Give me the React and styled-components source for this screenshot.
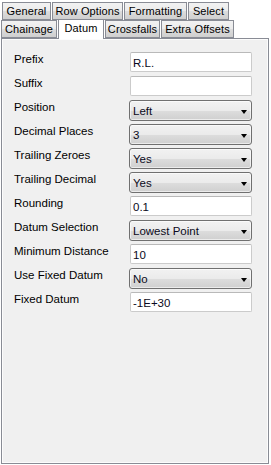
import styled, { createGlobalStyle } from 'styled-components';

const GlobalStyle = createGlobalStyle`
  html, body {
    margin: 0;
    padding: 0;
    background: #ffffff;
  }
  body {
    font-family: "Liberation Sans", Arial, sans-serif;
    font-size: 11.5px;
    color: #000;
  }
`;

const Window = styled.div`
  width: 271px;
  height: 465px;
  display: flex;
  flex-direction: column;
  padding: 2px 2px 1px 1px;
  box-sizing: border-box;
  background: #fff;
`;

const TabRow = styled.div`
  display: flex;
  align-items: flex-end;
  gap: 1px;
  height: 18px;
  padding-left: ${(p) => p.indent}px;
  position: relative;
  z-index: 1;
`;

const Tab = styled.div`
  box-sizing: border-box;
  width: ${(p) => p.w}px;
  height: ${(p) => (p.active ? 20 : 18)}px;
  margin-bottom: ${(p) => (p.active ? -1 : 0)}px;
  border: 1px solid #898c95;
  border-bottom: ${(p) => (p.active ? 'none' : '1px solid #898c95')};
  background: ${(p) => (p.active
    ? '#ffffff'
    : 'linear-gradient(#f2f2f2 0%, #ebebeb 50%, #dddddd 51%, #cfcfcf 100%)')};
  display: flex;
  justify-content: center;
  align-items: flex-start;
  padding-top: 2px;
  white-space: nowrap;
  font-size: 11px;
  letter-spacing: 0.1px;
`;

const Panel = styled.div`
  flex: 1;
  border: 1px solid #898c95;
  background: #f0f0f0;
  box-shadow: inset 0 0 0 1px #fcfcfc;
  padding: 13px 16px 0 12px;
  display: flex;
  flex-direction: column;
  gap: 4px;
`;

const Row = styled.div`
  display: flex;
  align-items: flex-start;
  justify-content: space-between;
  height: 20px;
`;

const Label = styled.div`
  line-height: 14px;
`;

const TextBox = styled.div`
  box-sizing: border-box;
  width: 122px;
  height: 20px;
  background: #fff;
  border: 1px solid #cbcbcb;
  border-top-color: #b9b9b9;
  border-radius: 2px;
  padding: 3px 0 0 2px;
  line-height: 14px;
  color: #0a0a20;
`;

const Combo = styled.div`
  box-sizing: border-box;
  width: 123px;
  height: 21px;
  border: 1px solid #707070;
  border-radius: 3px;
  background: linear-gradient(#f2f2f2 0%, #ebebeb 50%, #dddddd 51%, #cfcfcf 100%);
  box-shadow: inset 0 0 0 1px rgba(255, 255, 255, 0.6);
  padding: 3px 0 0 3px;
  line-height: 14px;
  display: flex;
  justify-content: space-between;
  color: #0a0a20;
`;

const Arrow = styled.span`
  width: 0;
  height: 0;
  margin: 6px 4px 0 0;
  border-left: 3.5px solid transparent;
  border-right: 3.5px solid transparent;
  border-top: 4px solid #000;
`;

const rowsTop = [
  ['General', 49], ['Row Options', 71], ['Formatting', 63], ['Select', 41],
];
const rowsBottom = [
  ['Chainage', 56], ['Datum', 46, true], ['Crossfalls', 55], ['Extra Offsets', 73],
];

const fields = [
  ['Prefix', 'text', 'R.L.'],
  ['Suffix', 'text', ''],
  ['Position', 'combo', 'Left'],
  ['Decimal Places', 'combo', '3'],
  ['Trailing Zeroes', 'combo', 'Yes'],
  ['Trailing Decimal', 'combo', 'Yes'],
  ['Rounding', 'text', '0.1'],
  ['Datum Selection', 'combo', 'Lowest Point'],
  ['Minimum Distance', 'text', '10'],
  ['Use Fixed Datum', 'combo', 'No'],
  ['Fixed Datum', 'text', '-1E+30'],
];

export default function App() {
  return <>
    <GlobalStyle />
    <Window>
      <TabRow indent={1}>
        {rowsTop.map(([name, w]) => <Tab key={name} w={w}>{name}</Tab>)}
      </TabRow>
      <TabRow indent={0}>
        {rowsBottom.map(([name, w, active]) => <Tab key={name} w={w} active={active}>{name}</Tab>)}
      </TabRow>
      <Panel>
        {fields.map(([label, kind, value]) => (
          <Row key={label}>
            <Label>{label}</Label>
            {kind === 'text'
              ? <TextBox>{value}</TextBox>
              : <Combo>{value}<Arrow /></Combo>}
          </Row>
        ))}
      </Panel>
    </Window>
  </>;
}
